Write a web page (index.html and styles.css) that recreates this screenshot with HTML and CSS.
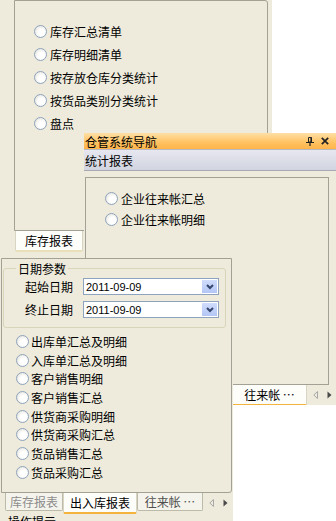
FILE: index.html
```html
<!DOCTYPE html>
<html lang="zh-CN">
<head>
    <meta charset="UTF-8">
    <title>仓管系统导航</title>
    <link rel="stylesheet" href="styles.css">
</head>
<body>
    <!-- docked pane: stock reports -->
    <div class="pane pane-stock">
        <div class="box box-stock">
            <ul class="radio-list list-stock">
                <li><span class="radio"></span>库存汇总清单</li>
                <li><span class="radio"></span>库存明细清单</li>
                <li><span class="radio"></span>按存放仓库分类统计</li>
                <li><span class="radio"></span>按货品类别分类统计</li>
                <li><span class="radio"></span>盘点</li>
            </ul>
        </div>
        <div class="tabstrip strip-stock">
            <span class="tab active">库存报表</span>
        </div>
    </div>

    <!-- floating window -->
    <div class="pane pane-nav">
        <div class="titlebar">
            <span class="title">仓管系统导航</span>
            <svg class="pin" width="8" height="9" viewBox="0 0 8 9">
                <path d="M2.5 0.5h3v4.5h-3z" fill="none" stroke="#222"/>
                <path d="M5 0.5v4.5M0 5.5h8M4 5.5v3.5" stroke="#222" stroke-width="1.2"/>
            </svg>
            <svg class="close" width="8" height="8" viewBox="0 0 8 8">
                <path d="M0.8 0.8l6.4 6.4M7.2 0.8l-6.4 6.4" stroke="#222" stroke-width="1.7"/>
            </svg>
        </div>
        <div class="caption"><span>统计报表</span></div>
        <div class="box box-nav">
            <ul class="radio-list list-nav">
                <li><span class="radio"></span>企业往来帐汇总</li>
                <li><span class="radio"></span>企业往来帐明细</li>
            </ul>
        </div>
        <div class="tabstrip strip-nav">
            <span class="tab">库存报表</span>
            <span class="tab">出入库报表</span>
            <span class="tab active tab-nav">往来帐 ⋯</span>
            <span class="scroll-btn">
                <svg width="5" height="8" viewBox="0 0 5 8"><path d="M4.5 0.5L0.8 4l3.7 3.5z" fill="none" stroke="#a8a8a8"/></svg>
            </span>
            <span class="scroll-btn">
                <svg width="5" height="8" viewBox="0 0 5 8"><path d="M0.5 0.5L4.5 4L0.5 7.5z" fill="#4a4a4a"/></svg>
            </span>
        </div>
    </div>

    <!-- docked pane: in/out reports -->
    <div class="pane pane-io">
        <div class="box box-io">
            <div class="group">
                <span class="group-title">日期参数</span>
                <div class="field">
                    <label>起始日期</label>
                    <div class="combo">
                        <span>2011-09-09</span>
                        <span class="drop">
                            <svg width="8" height="6" viewBox="0 0 8 6"><path d="M1 1l3 3 3-3" fill="none" stroke="#34466e" stroke-width="2"/></svg>
                        </span>
                    </div>
                </div>
                <div class="field">
                    <label>终止日期</label>
                    <div class="combo">
                        <span>2011-09-09</span>
                        <span class="drop">
                            <svg width="8" height="6" viewBox="0 0 8 6"><path d="M1 1l3 3 3-3" fill="none" stroke="#34466e" stroke-width="2"/></svg>
                        </span>
                    </div>
                </div>
            </div>
            <ul class="radio-list list-io">
                <li><span class="radio"></span>出库单汇总及明细</li>
                <li><span class="radio"></span>入库单汇总及明细</li>
                <li><span class="radio"></span>客户销售明细</li>
                <li><span class="radio"></span>客户销售汇总</li>
                <li><span class="radio"></span>供货商采购明细</li>
                <li><span class="radio"></span>供货商采购汇总</li>
                <li><span class="radio"></span>货品销售汇总</li>
                <li><span class="radio"></span>货品采购汇总</li>
            </ul>
        </div>
        <div class="tabstrip strip-io">
            <span class="tab tab-stock">库存报表</span>
            <span class="tab active tab-io">出入库报表</span>
            <span class="tab tab-acct">往来帐 ⋯</span>
            <span class="scroll-btn">
                <svg width="5" height="8" viewBox="0 0 5 8"><path d="M4.5 0.5L0.8 4l3.7 3.5z" fill="none" stroke="#a8a8a8"/></svg>
            </span>
            <span class="scroll-btn">
                <svg width="5" height="8" viewBox="0 0 5 8"><path d="M0.5 0.5L4.5 4L0.5 7.5z" fill="#4a4a4a"/></svg>
            </span>
        </div>
        <div class="hint">操作提示</div>
    </div>
</body>
</html>
```

FILE: styles.css
```css
* {
    box-sizing: border-box;
}

body {
    margin: 0;
    width: 336px;
    height: 521px;
    overflow: hidden;
    position: relative;
    background-color: #fff;
    font-family: "Noto Sans CJK SC", "Liberation Sans", sans-serif;
    font-size: 12px;
    color: #000;
}

.pane {
    position: absolute;
    background-color: #eeebdc;
    overflow: hidden;
}

.pane-stock {
    left: 0;
    top: 0;
    width: 272px;
    height: 258px;
    padding-left: 14px;
}

.pane-nav {
    left: 84px;
    top: 133px;
    width: 252px;
    height: 272px;
}

.pane-io {
    left: 0;
    top: 258px;
    width: 233px;
    height: 263px;
}

.box {
    border: 1px solid #a3a194;
}

.box-stock {
    width: 254px;
    height: 231px;
    border-radius: 0 3px 0 0;
}

.box-nav {
    margin: 6px 0 0 1px;
    width: 244px;
    height: 208px;
}

.box-io {
    margin-left: 1px;
    width: 231px;
    height: 235px;
    border-radius: 0 0 3px 0;
}

/* radio lists */
.radio-list {
    list-style: none;
    margin: 0;
    padding: 0;
}

.radio-list li {
    display: flex;
    align-items: center;
    gap: 3px;
    white-space: nowrap;
}

.radio {
    width: 13px;
    height: 13px;
    flex: none;
    border: 1px solid #8ea3bd;
    border-radius: 50%;
    background: radial-gradient(circle at 60% 60%, #fff 0, #fff 35%, #dcdad0 100%);
}

.list-stock {
    padding: 19px 0 0 19px;
}

.list-stock li {
    height: 23px;
}

.list-nav {
    padding: 10px 0 0 19px;
}

.list-nav li {
    height: 21px;
}

.list-io {
    padding: 4px 0 0 14px;
}

.list-io li {
    height: 18.7px;
    gap: 2px;
}

/* title bar and caption of the floating window */
.titlebar {
    height: 16px;
    display: flex;
    align-items: center;
    gap: 7px;
    padding-right: 7px;
    background: linear-gradient(#ffdfa6, #ffc260 60%, #ffb44a);
}

.title {
    flex: 1;
    margin-left: 1px;
    white-space: nowrap;
}

.caption {
    height: 22px;
    display: flex;
    align-items: center;
    border-top: 1px solid #b8b8c0;
    border-bottom: 1px solid #a9a9b6;
    background: linear-gradient(#e6e7ef, #d2d4e0);
}

.caption span {
    margin-left: 1px;
}

/* tab strips */
.tabstrip {
    display: flex;
    align-items: flex-start;
    height: 21px;
}

.tab {
    height: 18px;
    display: flex;
    align-items: center;
    justify-content: center;
    border: 1px solid #bcbaa9;
    border-top: none;
    border-radius: 0 0 2px 2px;
    background-color: #f5f4ec;
    color: #8c8c8c;
    white-space: nowrap;
}

.tab.active {
    height: 21px;
    background-color: #fdfdfa;
    color: #000;
    border-color: #d8d5c2;
    border-bottom: 2px solid #f3b33c;
}

.strip-stock {
    padding-left: 1px;
}

.strip-stock .tab.active {
    width: 68px;
    border-bottom: 2px solid #e9dfb8;
}

.strip-nav {
    padding-left: 5px;
}

.strip-nav .tab {
    width: 68px;
}

.strip-nav .tab + .tab {
    width: 75px;
}

.strip-nav .tab-nav {
    width: 70px;
}

.strip-io {
    padding-left: 5px;
}

.tab-stock {
    width: 58px;
}

.tab-io {
    width: 74px;
}

.tab-acct {
    width: 66px;
    color: #505050;
}

.scroll-btn {
    width: 14px;
    height: 19px;
    display: flex;
    align-items: center;
    justify-content: center;
}

.tabstrip .tab + .scroll-btn {
    margin-left: 1px;
}

/* date group */
.group {
    margin: 9px 5px 0 1px;
    border: 1px solid #d9d5b9;
    border-radius: 3px;
    padding: 0 5px 9px 21px;
}

.group-title {
    display: block;
    width: max-content;
    margin: -7px 0 0 -9px;
    padding: 0 2px;
    line-height: 14px;
    background-color: #eeebdc;
}

.field {
    display: flex;
    align-items: center;
    height: 17px;
    margin-top: 2px;
}

.field + .field {
    margin-top: 6px;
}

.field label {
    width: 58px;
}

.combo {
    width: 136px;
    height: 17px;
    display: flex;
    align-items: center;
    justify-content: space-between;
    padding: 1px 1px 1px 2px;
    border: 1px solid #8ea3bd;
    background-color: #fff;
    font-family: "Liberation Sans", sans-serif;
    font-size: 11px;
}

.drop {
    width: 15px;
    height: 13px;
    display: flex;
    align-items: center;
    justify-content: center;
    background: linear-gradient(#d0dcfb, #b3c6f5);
}

.hint {
    margin: 1px 0 0 8px;
    line-height: 14px;
}
```
